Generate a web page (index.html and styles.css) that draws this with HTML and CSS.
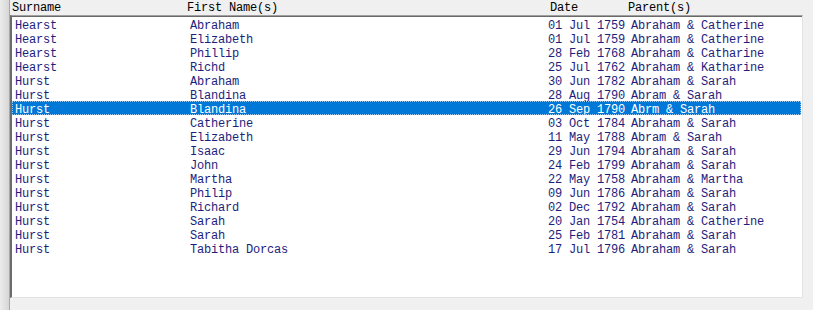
FILE: index.html
```html
<!DOCTYPE html>
<html>
<head>
<meta charset="utf-8">
<link rel="stylesheet" href="styles.css">
</head>
<body>
<div class="window">
  <div class="gutter"></div>
  <div class="main">
    <div class="head"><span class="h-sur">Surname</span><span class="h-first">First Name(s)</span><span class="h-date">Date</span><span class="h-par">Parent(s)</span></div>
    <div class="list">
      <div class="row"><span>Hearst</span><span>Abraham</span><span>01 Jul 1759</span><span>Abraham &amp; Catherine</span></div>
      <div class="row"><span>Hearst</span><span>Elizabeth</span><span>01 Jul 1759</span><span>Abraham &amp; Catherine</span></div>
      <div class="row"><span>Hearst</span><span>Phillip</span><span>28 Feb 1768</span><span>Abraham &amp; Catharine</span></div>
      <div class="row"><span>Hearst</span><span>Richd</span><span>25 Jul 1762</span><span>Abraham &amp; Katharine</span></div>
      <div class="row"><span>Hurst</span><span>Abraham</span><span>30 Jun 1782</span><span>Abraham &amp; Sarah</span></div>
      <div class="row"><span>Hurst</span><span>Blandina</span><span>28 Aug 1790</span><span>Abram &amp; Sarah</span></div>
      <div class="row selected"><span>Hurst</span><span>Blandina</span><span>26 Sep 1790</span><span>Abrm &amp; Sarah</span></div>
      <div class="row"><span>Hurst</span><span>Catherine</span><span>03 Oct 1784</span><span>Abraham &amp; Sarah</span></div>
      <div class="row"><span>Hurst</span><span>Elizabeth</span><span>11 May 1788</span><span>Abram &amp; Sarah</span></div>
      <div class="row"><span>Hurst</span><span>Isaac</span><span>29 Jun 1794</span><span>Abraham &amp; Sarah</span></div>
      <div class="row"><span>Hurst</span><span>John</span><span>24 Feb 1799</span><span>Abraham &amp; Sarah</span></div>
      <div class="row"><span>Hurst</span><span>Martha</span><span>22 May 1758</span><span>Abraham &amp; Martha</span></div>
      <div class="row"><span>Hurst</span><span>Philip</span><span>09 Jun 1786</span><span>Abraham &amp; Sarah</span></div>
      <div class="row"><span>Hurst</span><span>Richard</span><span>02 Dec 1792</span><span>Abraham &amp; Sarah</span></div>
      <div class="row"><span>Hurst</span><span>Sarah</span><span>20 Jan 1754</span><span>Abraham &amp; Catherine</span></div>
      <div class="row"><span>Hurst</span><span>Sarah</span><span>25 Feb 1781</span><span>Abraham &amp; Sarah</span></div>
      <div class="row"><span>Hurst</span><span>Tabitha Dorcas</span><span>17 Jul 1796</span><span>Abraham &amp; Sarah</span></div>
    </div>
  </div>
</div>
</body>
</html>
```

FILE: styles.css
```css
html, body {
  margin: 0;
  padding: 0;
  background: #f0f0f0;
}

.window {
  display: flex;
  width: 813px;
  height: 310px;
  overflow: hidden;
  font-family: "Liberation Mono", "Courier New", monospace;
  font-size: 12px;
  letter-spacing: -0.2px;
}

/* splitter strip on the left edge */
.gutter {
  width: 9px;
  flex: none;
  background: linear-gradient(to right, #ececec, #d6d6d6);
  border-right: 1px solid #a9a9a9;
}

.main {
  width: 793px;
  flex: none;
  display: flex;
  flex-direction: column;
}

/* column captions, aligned over the list columns */
.head {
  height: 15px;
  box-sizing: border-box;
  padding-top: 2px;
  padding-left: 2px;
  line-height: 13px;
  display: flex;
  color: #000;
  white-space: nowrap;
}

.h-sur { width: 175px; flex: none; }
.h-first { width: 363px; flex: none; }
.h-date { width: 78px; flex: none; }
.h-par { flex: 1; }

.list {
  height: 283px;
  box-sizing: border-box;
  background: #fff;
  border-top: 1px solid #a0a0a0;
  border-left: 2px solid #6b6b6b;
  border-right: 1px solid #e3e3e3;
  border-bottom: 1px solid #e3e3e3;
  box-shadow: inset 0 1px 0 #696969;
  padding-top: 1px;
  padding-right: 1px;
}

.row {
  height: 14px;
  box-sizing: border-box;
  padding-top: 3px;
  line-height: 12px;
  display: grid;
  grid-template-columns: 175px 358px 83px 1fr;
  padding-left: 3px;
  color: #1e1e7c;
  white-space: pre;
}

.row.selected {
  background: #0078d7;
  color: #fff;
  outline: 1px dotted #9cc8ee;
  outline-offset: -1px;
}
```
